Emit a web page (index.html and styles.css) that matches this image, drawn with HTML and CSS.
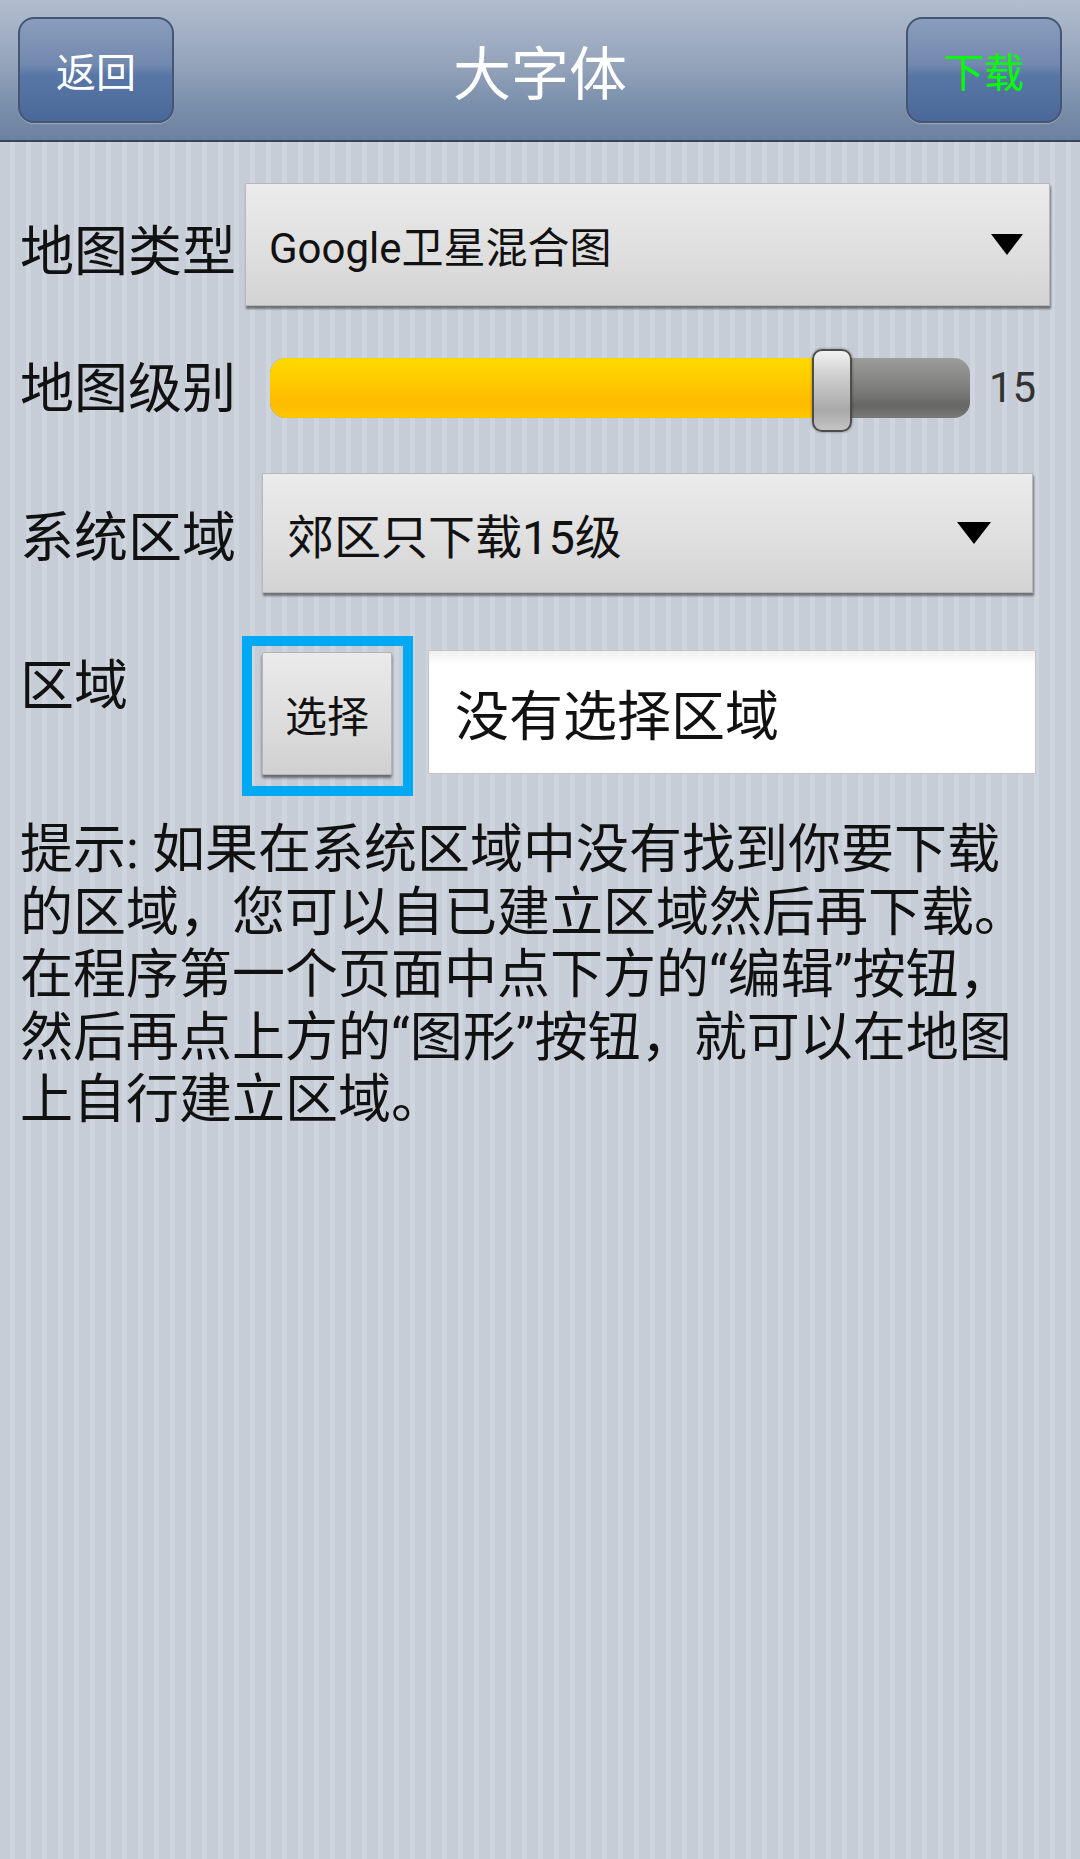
FILE: index.html
```html
<!DOCTYPE html>
<html lang="zh-CN">
<head>
    <meta charset="UTF-8">
    <meta name="viewport" content="width=device-width, initial-scale=1.0">
    <title>大字体</title>
    <link rel="stylesheet" href="styles.css">
</head>
<body>

    <!-- Barra superior -->
    <div class="topbar">
        <button class="bar-button">返回</button>
        <h1>大字体</h1>
        <button class="bar-button download">下载</button>
    </div>

    <div class="content">
        <!-- Tipo de mapa -->
        <div class="row row-type">
            <span class="label label-type">地图类型</span>
            <div class="spinner spinner-type">
                <span>Google卫星混合图</span>
                <svg class="arrow" width="32" height="21" viewBox="0 0 32 21"><polygon points="0,0 32,0 16,21" fill="#000"/></svg>
            </div>
        </div>

        <!-- Nivel do mapa -->
        <div class="row row-level">
            <span class="label label-level">地图级别</span>
            <div class="track">
                <div class="fill" style="width: 562px;"></div>
                <div class="thumb" style="left: 542px;"></div>
            </div>
            <span class="level-value">15</span>
        </div>

        <!-- Area do sistema -->
        <div class="row row-system">
            <span class="label label-system">系统区域</span>
            <div class="spinner spinner-system">
                <span>郊区只下载15级</span>
                <svg class="arrow" width="34" height="22" viewBox="0 0 34 22"><polygon points="0,0 34,0 17,22" fill="#000"/></svg>
            </div>
        </div>

        <!-- Area escolhida -->
        <div class="row row-area">
            <span class="label label-area">区域</span>
            <div class="focus-box">
                <button class="pick-button">选择</button>
            </div>
            <div class="area-field">没有选择区域</div>
        </div>

        <p class="hint">提示: 如果在系统区域中没有找到你要下载的区域，您可以自已建立区域然后再下载。在程序第一个页面中点下方的“编辑”按钮，然后再点上方的“图形”按钮，就可以在地图上自行建立区域。</p>
    </div>

</body>
</html>
```

FILE: styles.css
```css
body {
    font-family: Roboto, "Noto Sans CJK SC", sans-serif;
    margin: 0;
    min-height: 1859px;
    background-color: #c8ced7;
    background-image: repeating-linear-gradient(90deg, #c7cdd6 0px, #c7cdd6 10px, #cfd5de 10px, #cfd5de 15px, #c7cdd6 15px, #c7cdd6 16px);
    color: #111;
}

.topbar {
    height: 140px;
    padding: 0 18px;
    display: flex;
    justify-content: space-between;
    align-items: center;
    background: linear-gradient(#b2bdce, #95a4bb 45%, #7a8fab 75%, #6b81a0);
    border-bottom: 2px solid #3b4454;
}

.topbar h1 {
    margin: 0;
    font-size: 58px;
    font-weight: 400;
    color: #fff;
}

.bar-button {
    width: 156px;
    height: 106px;
    font-family: Roboto, "Noto Sans CJK SC", sans-serif;
    font-size: 40px;
    color: #fff;
    background: linear-gradient(#8a9dbd, #7288ae 45%, #5877a6 55%, #4a6899);
    border: 2px solid #445672;
    border-radius: 16px;
    box-shadow: 0 1px 1px rgba(255, 255, 255, 0.3);
    padding: 0;
}

.bar-button.download {
    color: #00ff00;
}

.content {
    padding: 41px 0 0 20px;
}

.row {
    display: flex;
    align-items: center;
}

.label {
    flex: none;
    font-size: 54px;
    line-height: 62px;
    color: #111;
}

.label-type {
    width: 225px;
    margin-top: 16px;
}

.label-level {
    width: 250px;
    margin-top: 4px;
}

.label-system {
    width: 242px;
    margin-top: 12px;
}

.label-area {
    width: 222px;
    padding-top: 20px;
}

.spinner {
    display: flex;
    justify-content: space-between;
    align-items: center;
    box-sizing: border-box;
    background: linear-gradient(#ebebeb, #dedede 60%, #d3d3d3);
    border: 1px solid #b8b8b8;
    box-shadow: 1px 3px 2px rgba(0, 0, 0, 0.45);
    color: #111;
}

.spinner-type {
    width: 805px;
    height: 123px;
    padding: 0 26px 0 23px;
    font-size: 42px;
}

.spinner-system {
    width: 771px;
    height: 120px;
    padding: 0 41px 0 24px;
    font-size: 47px;
}

.row-level {
    height: 83px;
    margin-top: 40px;
}

.track {
    position: relative;
    width: 700px;
    height: 60px;
    border-radius: 16px;
    background: linear-gradient(#9c9d9b, #7b7c7a 55%, #666765 80%, #7a7b79);
}

.fill {
    height: 100%;
    border-radius: 16px 0 0 16px;
    background: linear-gradient(#ffd900, #ffc800 45%, #ffbb00 75%, #ffc600);
}

.thumb {
    position: absolute;
    top: -9px;
    width: 36px;
    height: 79px;
    border: 2px solid #4d4d4d;
    border-radius: 10px;
    background: linear-gradient(#f2f2f2, #d0d0d0 30%, #a9a9a9 75%, #c4c4c4);
    box-shadow: 0 0 3px rgba(0, 0, 0, 0.4);
}

.level-value {
    margin-left: 19px;
    font-size: 42px;
    color: #333;
}

.row-system {
    margin-top: 44px;
}

.row-area {
    margin-top: 43px;
    align-items: flex-start;
}

.focus-box {
    flex: none;
    border: 10px solid #01a9f2;
    padding: 6px 11px 11px 10px;
}

.pick-button {
    display: block;
    width: 130px;
    height: 123px;
    padding: 0;
    font-family: Roboto, "Noto Sans CJK SC", sans-serif;
    font-size: 42px;
    color: #111;
    background: linear-gradient(#eaeaea, #dcdcdc 60%, #d0d0d0);
    border: 1px solid #b5b5b5;
    border-radius: 2px;
    box-shadow: 0 3px 3px rgba(0, 0, 0, 0.5);
}

.area-field {
    box-sizing: border-box;
    width: 608px;
    height: 124px;
    margin: 14px 0 0 15px;
    padding-left: 26px;
    display: flex;
    align-items: center;
    font-size: 54px;
    background: linear-gradient(#f0f0f0, #ffffff 12%);
    border: 1px solid #c4c4c4;
}

.hint {
    width: 1015px;
    margin: 23px 0 0;
    font-size: 53px;
    line-height: 62.5px;
    color: #111;
}
```
